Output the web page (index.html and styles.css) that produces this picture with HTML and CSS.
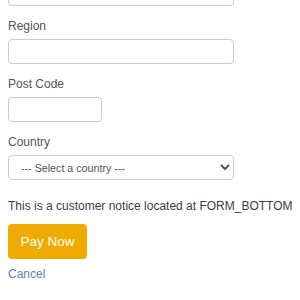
FILE: index.html
```html
<!DOCTYPE html>
<html>
	<head>
		<meta charset="utf-8">
		<link rel="stylesheet" href="styles.css">
	</head>
	<body>
		<form class="payform">
			<div class="field">
				<input class="textinput" type="text">
			</div>
			<div class="field">
				<label class="fieldlabel">Region</label>
				<input class="textinput" type="text">
			</div>
			<div class="field">
				<label class="fieldlabel">Post Code</label>
				<input class="textinput short" type="text">
			</div>
			<div class="field">
				<label class="fieldlabel">Country</label>
				<select class="selectinput">
					<option>--- Select a country ---</option>
				</select>
			</div>
			<p class="notice">This is a customer notice located at FORM_BOTTOM</p>
			<button class="paybutton" type="button">Pay Now</button>
			<a class="cancel" href="#">Cancel</a>
		</form>
	</body>
</html>
```

FILE: styles.css
```css
body {
	margin: 0px;
	font-family: "Liberation Sans", Arial, sans-serif;
	background: #ffffff;
}
.payform {
	margin: -19px 0 0 8px;
	width: 226px;
}
.field {
	margin-bottom: 12px;
}
.fieldlabel {
	display: block;
	font-size: 12px;
	line-height: 17px;
	color: #555555;
	margin-bottom: 4px;
}
.textinput {
	display: block;
	box-sizing: border-box;
	width: 226px;
	height: 25px;
	border: 1px solid #cccccc;
	border-radius: 4px;
	margin: 0;
	padding: 0 8px;
}
.textinput.short {
	width: 94px;
}
.selectinput {
	display: block;
	box-sizing: border-box;
	width: 226px;
	height: 25px;
	border: 1px solid #cccccc;
	border-radius: 4px;
	background: #ffffff;
	color: #555555;
	font-family: "Liberation Sans", Arial, sans-serif;
	font-size: 10.7px;
	padding: 0 0 0 8px;
	margin: 0;
}
.notice {
	margin: 18px 0 9px 0;
	font-size: 12px;
	line-height: 17px;
	color: #3d3d3d;
	white-space: nowrap;
}
.paybutton {
	display: block;
	width: 79px;
	height: 35px;
	border: none;
	border-radius: 4px;
	background: #f0ab00;
	color: #ffffff;
	font-family: "Liberation Sans", Arial, sans-serif;
	font-size: 13.5px;
	padding: 0;
	margin: 0;
}
.cancel {
	display: block;
	margin-top: 7px;
	font-size: 12px;
	line-height: 17px;
	color: #5a7fb5;
	text-decoration: none;
}
```
